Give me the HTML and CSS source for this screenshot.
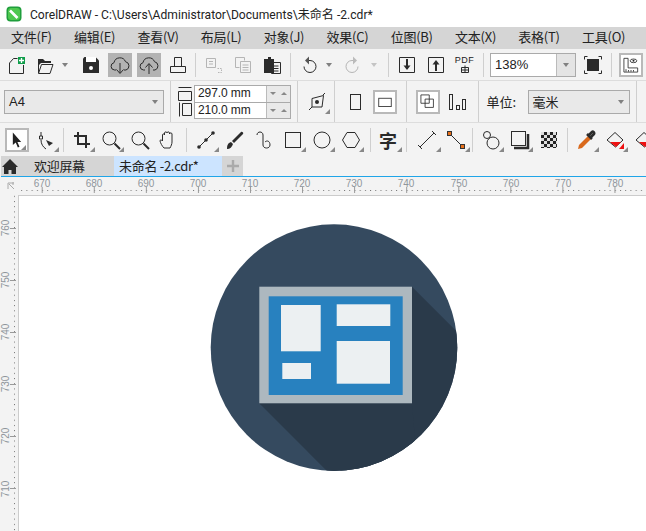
FILE: index.html
```html
<!DOCTYPE html>
<html lang="zh-CN"><head>
<meta charset="utf-8">
<title>CorelDRAW</title>
<link rel="stylesheet" href="styles.css">
</head>
<body>
<div class="app">

  <div class="titlebar">
    <svg class="logo" width="16" height="16" viewBox="0 0 16 16"><rect x="0.5" y="0.5" width="15" height="15" rx="4" fill="#1f9e3c"/><rect x="2" y="2" width="12" height="12" rx="3" fill="#4fc84f"/><path d="M4 4.500 11.500 12" stroke="#fff" stroke-width="2.600"/></svg>
    <span>CorelDRAW - C:\Users\Administrator\Documents\未命名 -2.cdr*</span>
  </div>

  <div class="menubar">
    <span>文件(F)</span><span>编辑(E)</span><span>查看(V)</span><span>布局(L)</span><span>对象(J)</span><span>效果(C)</span><span>位图(B)</span><span>文本(X)</span><span>表格(T)</span><span>工具(O)</span>
  </div>

  <div class="bar stdbar">
    <div class="btn"><svg viewBox="0 0 24 24"><path d="M4.500 20.500V10l4-4.500h4M18.500 12v8.500h-14" class="ln"/><rect x="13" y="4" width="7" height="7" fill="#0f9d4a"/><path d="M16.500 5v5M14 7.500h5" stroke="#fff" stroke-width="1.300"/></svg></div>
    <div class="btn"><svg viewBox="0 0 24 24"><path d="M4 6h5l2 2h6v2H7l-2 2-1 5z" fill="#2b2b2b"/><path d="M4.500 20.500h11.500l3-9H7.500z" class="ln"/><path d="M4.500 7v13" class="ln"/></svg></div>
    <div class="drop"><i></i></div>
    <div class="btn"><svg viewBox="0 0 24 24"><path d="M4 5.500 5.500 4h11L20 7.500V20H4z" fill="#2b2b2b"/><rect x="7" y="4" width="10" height="5" fill="#fff"/><circle cx="12" cy="15" r="2" fill="#fff"/></svg></div>
    <div class="btn on"><svg viewBox="0 0 24 24"><path d="M8 17H6.500a3.700 3.700 0 0 1-.5-7.300 6 6 0 0 1 11.500-1 4.300 4.300 0 0 1 .5 8.300h-2" class="ln"/><path d="M12 10v10M8.500 16.500 12 20.500l3.500-4" class="ln"/></svg></div>
    <div class="btn on"><svg viewBox="0 0 24 24"><path d="M8 17H6.500a3.700 3.700 0 0 1-.5-7.300 6 6 0 0 1 11.500-1 4.300 4.300 0 0 1 .5 8.300h-2" class="ln"/><path d="M12 21V11M8.500 14.500 12 10.500l3.500 4" class="ln"/></svg></div>
    <div class="btn"><svg viewBox="0 0 24 24"><path d="M8.500 13.500v-9h7v9M4.500 13.500h15v6h-15z" class="ln"/></svg></div>
    <div class="sep"></div>
    <div class="btn"><svg viewBox="0 0 24 24"><path d="M4.500 5.500h9v9h-9zM7 8.500h4M7 11h4" class="ln dim"/><path d="M15.500 15.500h4v4h-4" class="ln dim" stroke-dasharray="1.500 1"/></svg></div>
    <div class="btn"><svg viewBox="0 0 24 24"><path d="M4.500 4.500h9v3M4.500 4.500v10h4" class="ln dim"/><path d="M9.500 8.500h10v11h-10zM11.500 12h6M11.500 14.500h6M11.500 17h6" class="ln dim"/></svg></div>
    <div class="btn"><svg viewBox="0 0 24 24"><path d="M4 6h4V4h3v2h3v14H4z" fill="#2b2b2b"/><path d="M11.500 9.500h9v11h-9zM13.500 13h5M13.500 15.500h5M13.500 18h5" class="ln" fill="#fff"/></svg></div>
    <div class="sep gap"></div>
    <div class="btn"><svg viewBox="0 0 24 24"><path d="M10 7.500h3a6 6 0 1 1-6 6" class="ln"/><path d="M12 3.500v8l-4-4z" fill="#555"/></svg></div>
    <div class="drop mini"><i></i></div>
    <div class="btn"><svg viewBox="0 0 24 24"><path d="M14 7.500h-3a6 6 0 1 0 6 6" class="ln dim"/><path d="M12 3.500v8l4-4z" fill="#bbb"/></svg></div>
    <div class="drop mini faint"><i></i></div>
    <div class="sep"></div>
    <div class="btn"><svg viewBox="0 0 24 24"><path d="M4.500 4.500h15v15h-15z" class="ln"/><path d="M12 6v10" stroke="#2b2b2b" stroke-width="2"/><path d="M8.500 12.500h7L12 17z" fill="#2b2b2b"/></svg></div>
    <div class="btn"><svg viewBox="0 0 24 24"><path d="M4.500 4.500h15v15h-15z" class="ln"/><path d="M12 18V9" stroke="#2b2b2b" stroke-width="2"/><path d="M8.500 11.500h7L12 7z" fill="#2b2b2b"/></svg></div>
    <div class="btn pdf"><span>PDF</span><svg width="12" height="8" viewBox="0 0 12 8"><path d="M2.500 2.500h7v5h-7zM6 .5v7M2.500 5h7" class="ln"/></svg></div>
    <div class="sep gap"></div>
    <div class="combo zoombox"><span>138%</span><div class="cbtn"><i></i></div></div>
    <div class="btn"><svg viewBox="0 0 24 24"><rect x="6" y="6" width="12" height="12" fill="#2b2b2b"/><path d="M3.500 6.500v-3h3M17.500 3.500h3v3M20.500 17.500v3h-3M6.500 20.500h-3v-3" class="ln"/></svg></div>
    <div class="sep gap"></div>
    <div class="btn boxed"><svg viewBox="0 0 24 24"><path d="M3.500 4v16.500H20v-5H8.500V4z" class="ln"/><path d="M6 17v3M9 18v2M12 18v2M15 18v2" class="ln"/><ellipse cx="15" cy="7" rx="4" ry="2.200" class="ln"/><circle cx="15" cy="7" r="1.200" fill="#2b2b2b"/></svg></div>
  </div>

  <div class="bar propbar">
    <div class="combo pagesize"><span>A4</span><i></i></div>
    <div class="sep tall"></div>
    <div class="sizes">
      <div class="sizeicons">
        <svg width="14" height="15" viewBox="0 0 14 15"><path d="M.5 1.500h13M.5 5.500h13v9H.5z" class="ln"/></svg>
        <svg width="14" height="15" viewBox="0 0 14 15"><path d="M1.500.5v14M4.500 1.500h9v12h-9z" class="ln"/></svg>
      </div>
      <div class="sizefields">
        <div class="field"><span>297.0 mm</span><div class="spin"><i class="dn"></i><i class="up"></i></div></div>
        <div class="field"><span>210.0 mm</span><div class="spin"><i class="dn"></i><i class="up"></i></div></div>
      </div>
    </div>
    <div class="sep tall"></div>
    <div class="btn flyout origin"><svg viewBox="0 0 24 24"><path d="M7 8.500 18.500 5.500l-1.500 11.500H7z" class="ln"/><circle cx="12" cy="12" r="2" fill="#2b2b2b"/><path d="M7 17l-3 3M18 5l2-2" class="ln"/></svg></div>
    <div class="sep tall s-page"></div>
    <div class="btn portrait"><svg viewBox="0 0 24 24"><rect x="7.500" y="4.500" width="10" height="15" class="ln"/></svg></div>
    <div class="btn boxed"><svg viewBox="0 0 24 24"><rect x="4.500" y="7.500" width="15" height="10" class="ln"/></svg></div>
    <div class="sep tall s-layout"></div>
    <div class="btn boxed first"><svg viewBox="0 0 24 24"><path d="M3.500 3.500h10v10h-10zM8.500 8.500h10v10h-10z" class="ln"/></svg></div>
    <div class="btn"><svg viewBox="0 0 24 24"><rect x="4.500" y="4.500" width="3" height="15" class="ln"/><rect x="11.500" y="15.500" width="3" height="4" class="ln"/><rect x="17.500" y="9.500" width="3" height="10" class="ln"/></svg></div>
    <div class="sep tall s-unit"></div>
    <span class="unitlabel">单位:</span>
    <div class="combo unitbox"><span>毫米</span><i></i></div>
    <div class="sep tall"></div>
  </div>

  <div class="bar toolbox">
    <div class="btn boxed first flyout"><svg viewBox="0 0 24 24"><path d="M7 3v15l3.500-3 2.500 6 2-1-2.500-5.500H17z" fill="#222"/></svg></div>
    <div class="btn flyout"><svg viewBox="0 0 24 24"><path d="M7 4v4M7 12c0 4 2 7 5 9M5.500 8h3v3h-3z" class="ln"/><path d="M12 12l7 3-4 3z" fill="#2b2b2b"/></svg></div>
    <div class="sep short"></div>
    <div class="btn flyout"><svg viewBox="0 0 24 24"><path d="M8 4v12h12M4 8h12v12" stroke="#2b2b2b" stroke-width="2" fill="none"/></svg></div>
    <div class="btn flyout"><svg viewBox="0 0 24 24"><circle cx="10.500" cy="10.500" r="6.500" class="ln"/><path d="M15.500 15.500 21 21" stroke="#2b2b2b" stroke-width="2"/></svg></div>
    <div class="btn"><svg viewBox="0 0 24 24"><circle cx="10.500" cy="10.500" r="6.500" class="ln"/><path d="M15.500 15.500 21 21" stroke="#2b2b2b" stroke-width="2"/></svg></div>
    <div class="btn"><svg viewBox="0 0 24 24"><path d="M7 20c-2-2-3.500-5-4-7 0-1.500 1.500-1.500 2.500 0V7c0-1.500 2-1.500 2 0V5c0-1.500 2.500-1.500 2.500 0v0c0-1.500 2.500-1.500 2.500 0v1c0-1.500 2.500-1.500 2.500 0v8c0 2-1 4-2 6z" class="ln"/></svg></div>
    <div class="sep short s-draw"></div>
    <div class="btn flyout"><svg viewBox="0 0 24 24"><path d="M5 19 19 5" class="ln"/><circle cx="5" cy="19" r="1.800" fill="#2b2b2b"/><circle cx="12" cy="12" r="1.800" fill="#2b2b2b"/><circle cx="19" cy="5" r="1.800" fill="#2b2b2b"/></svg></div>
    <div class="btn"><svg viewBox="0 0 24 24"><path d="M4 21c0-4 1-6 4-7l2 2c-1 3-3 5-6 5z" fill="#2b2b2b"/><path d="M9 13 18 4c1-1 3 1 2 2l-9 9z" fill="#2b2b2b"/></svg></div>
    <div class="btn"><svg viewBox="0 0 24 24"><path d="M5 7c0-4 6-4 6 0v10c0 4 7 4 7 0s-3-5-5-3" class="ln" fill="none"/></svg></div>
    <div class="btn flyout"><svg viewBox="0 0 24 24"><rect x="4.500" y="4.500" width="15" height="15" class="ln"/></svg></div>
    <div class="btn flyout"><svg viewBox="0 0 24 24"><circle cx="12" cy="12" r="8" class="ln"/></svg></div>
    <div class="btn flyout"><svg viewBox="0 0 24 24"><path d="M8 4.500h8l4.500 7.500-4.500 7.500H8L3.500 12z" class="ln"/></svg></div>
    <div class="sep short s-text"></div>
    <div class="btn flyout glyph">字</div>
    <div class="sep short s-dim"></div>
    <div class="btn flyout"><svg viewBox="0 0 24 24"><path d="M5 19 19 5M3 17l4 4M17 3l4 4" class="ln"/></svg></div>
    <div class="btn flyout"><svg viewBox="0 0 24 24"><path d="M6 6 18 18" class="ln"/><rect x="3.500" y="3.500" width="4" height="4" fill="#e8701a" stroke="#333"/><rect x="16.500" y="16.500" width="4" height="4" fill="#e8701a" stroke="#333"/></svg></div>
    <div class="sep short s-effect"></div>
    <div class="btn flyout"><svg viewBox="0 0 24 24"><circle cx="8" cy="7" r="3.500" class="ln"/><circle cx="14" cy="15" r="6" class="ln"/></svg></div>
    <div class="btn flyout"><svg viewBox="0 0 24 24"><rect x="3.500" y="3.500" width="14" height="14" class="ln" stroke-width="1.500"/><path d="M20 6v14H6" stroke="#2b2b2b" stroke-width="2.500" fill="none"/></svg></div>
    <div class="btn"><svg viewBox="0 0 24 24"><defs><pattern id="chk" width="6" height="6" patternUnits="userSpaceOnUse" x="4" y="4"><rect width="6" height="6" fill="#222"/><rect width="3" height="3" fill="#ddd"/><rect x="3" y="3" width="3" height="3" fill="#ddd"/></pattern></defs><rect x="4" y="4" width="16" height="16" fill="url(#chk)"/></svg></div>
    <div class="sep short s-color"></div>
    <div class="btn flyout"><svg viewBox="0 0 24 24"><path d="M4 21l1-4 9-9 3 3-9 9z" fill="#d9691c"/><path d="M13 6l5 5M15 7l3-3c1-1 3 1 2 2l-3 3" stroke="#2b2b2b" stroke-width="2.500" fill="none"/></svg></div>
    <div class="btn flyout"><svg viewBox="0 0 24 24"><path d="M12 4.500 20 12l-7.500 7L4 12z" class="ln" stroke-width="2"/><path d="M7 14h11l-5 5z" fill="#e11"/><path d="M21 15v6h-5z" fill="#e11"/></svg></div>
    <div class="btn"><svg viewBox="0 0 24 24"><path d="M12 4.500 20 12l-7.500 7L4 12z" class="ln" stroke-width="2"/><path d="M7 14h11l-5 5z" fill="#e11"/></svg></div>
  </div>

  <div class="tabs">
    <div class="tab home"><svg width="16" height="15" viewBox="0 0 16 15"><path d="M8 0 16 8h-2v7H9.500v-4h-3v4H2V8H0z" fill="#2b2b2b"/></svg></div>
    <div class="tab welcome">欢迎屏幕</div>
    <div class="tab current">未命名 -2.cdr*</div>
    <div class="tab plus"><svg width="12" height="12" viewBox="0 0 12 12"><path d="M6 0v12M0 6h12" stroke="#aaa" stroke-width="2.400"/></svg></div>
  </div>

  <svg class="ruler-h" width="646" height="18" viewBox="0 177 646 18">
    <defs>
      <pattern id="dotsh" x="21.200" y="190" width="5.207" height="2" patternUnits="userSpaceOnUse"><rect width="1" height="1" fill="#777"/></pattern>
      <pattern id="tickh" x="41.700" y="187" width="52.07" height="8" patternUnits="userSpaceOnUse"><rect width="1" height="6" fill="#999"/></pattern>
    </defs>
    <path d="M8 183h6M8 183v6M9 184l5 5M13 182v3" stroke="#aaa" fill="none"/>
    <rect x="19" y="190" width="627" height="2" fill="url(#dotsh)"/>
    <rect x="19" y="187" width="627" height="6" fill="url(#tickh)"/>
    <g class="rtext" text-anchor="middle">
      <text x="42" y="186.500">670</text><text x="94" y="186.500">680</text><text x="146" y="186.500">690</text><text x="198" y="186.500">700</text><text x="250" y="186.500">710</text><text x="302" y="186.500">720</text><text x="354" y="186.500">730</text><text x="406" y="186.500">740</text><text x="459" y="186.500">750</text><text x="511" y="186.500">760</text><text x="563" y="186.500">770</text><text x="615" y="186.500">780</text>
    </g>
  </svg>

  <div class="work">
    <svg class="ruler-v" width="18" height="336" viewBox="0 195 18 336">
      <defs>
        <pattern id="dotsv" x="14" y="201" width="2" height="5.207" patternUnits="userSpaceOnUse"><rect width="1" height="1" fill="#777"/></pattern>
      </defs>
      <rect x="14" y="195" width="2" height="336" fill="url(#dotsv)"/>
      <path d="M10 228.500h6M10 280.500h6M10 332.500h6M10 384.500h6M10 436.500h6M10 488.500h6" stroke="#999"/>
      <g class="rtext" text-anchor="middle">
        <text transform="translate(9.200 228) rotate(-90)">760</text>
        <text transform="translate(9.200 280) rotate(-90)">750</text>
        <text transform="translate(9.200 332) rotate(-90)">740</text>
        <text transform="translate(9.200 384) rotate(-90)">730</text>
        <text transform="translate(9.200 436) rotate(-90)">720</text>
        <text transform="translate(9.200 489) rotate(-90)">710</text>
      </g>
    </svg>
    <div class="sheet">
      <svg width="628" height="336" viewBox="18 195 628 336">
        <defs><clipPath id="disc"><circle cx="334" cy="347.600" r="123.300"/></clipPath></defs>
        <circle cx="334" cy="347.600" r="123.300" fill="#354a5f"/>
        <path d="M412 286.700 500 374.700V520H400L259.300 403.300z" fill="#2a3a4a" clip-path="url(#disc)"/>
        <path d="M259.300 403.300 326.700 470.700 420 500 412 403.300z" fill="#2a3a4a" clip-path="url(#disc)"/>
        <rect x="259.300" y="286.700" width="152.700" height="116.600" fill="#adb8bf"/>
        <rect x="268.700" y="296.300" width="134" height="98.700" fill="#2881bf"/>
        <g fill="#ecf0f2">
          <rect x="281" y="305" width="39.700" height="46.300"/>
          <rect x="336.700" y="304.300" width="53.600" height="21.700"/>
          <rect x="336.700" y="341" width="53.300" height="42.700"/>
          <rect x="282.300" y="363" width="28.700" height="16"/>
        </g>
      </svg>
    </div>
  </div>

</div>
</body>
</html>
```

FILE: styles.css
```css
*,*::before,*::after {box-sizing: border-box;}
html,body {margin: 0; padding: 0;}
body {
  font-family: "Liberation Sans", "Noto Sans CJK SC", sans-serif;
  font-size: 13px;
  color: #222;
  background: #fff;
}
.app {
  width: 646px;
  height: 531px;
  overflow: hidden;
  display: flex;
  flex-direction: column;
  background: #f3f3f3;
}
svg {display: block;}
.ln {fill: none; stroke: #2b2b2b; stroke-width: 1;}
.ln.dim {stroke: #b5b5b5;}

.titlebar {
  height: 27px;
  background: #fff;
  display: flex;
  align-items: center;
  padding-left: 6px;
  gap: 8px;
  font-family: Roboto, "Noto Sans CJK SC", sans-serif;
  font-size: 12.100px;
  white-space: nowrap;
}
.menubar {
  height: 22px;
  background: #d5d5d5;
  display: flex;
  align-items: center;
  gap: 22.300px;
  padding: 0 0 3px 11px;
  font-family: "Noto Sans CJK SC", sans-serif;
  font-size: 13px;
  letter-spacing: -.25px;
}
.menubar span {flex: none; white-space: nowrap;}

.bar {display: flex; align-items: center; background: #f3f3f3; border-bottom: 1px solid #ddd;}
.stdbar {height: 32px; padding-left: 2px;}
.propbar {height: 42px; padding-left: 4px;}
.toolbox {height: 30px; padding-left: 5px; border-bottom: 0; align-items: flex-end; padding-bottom: 1px;}

.btn {
  position: relative;
  flex: none;
  width: 29px;
  height: 24px;
  display: flex;
  align-items: center;
  justify-content: center;
}
.btn svg {width: 24px; height: 24px;}
.btn.on::before {
  content: "";
  position: absolute;
  left: 2.500px;
  top: 0;
  width: 24px;
  height: 24px;
  background: #b3b3b3;
}
.btn.on svg {position: relative;}
.btn.boxed {width: 24px; background: #fff; border: 2px solid #b9b9b9;}
.btn.boxed.first {margin-right: 2px;}
.stdbar .btn.boxed {margin-left: 4px;}
.btn.flyout::after {
  content: "";
  position: absolute;
  right: 1px;
  bottom: 0;
  border-style: solid;
  border-width: 0 0 5px 5px;
  border-color: transparent transparent #888 transparent;
}
.btn.origin {margin-left: -2px;}
.btn.portrait {margin-right: 3.500px;}
.glyph {font-family: "Noto Sans CJK SC", sans-serif; font-weight: 700; font-size: 18px; color: #2b2b2b;}
.pdf {flex-direction: column; font-size: 9px; line-height: 9px; letter-spacing: .5px;}
.pdf svg {width: 12px; height: 8px;}

.drop {flex: none; width: 16px; height: 24px; display: flex; align-items: center; padding-left: 2px;}
.drop.mini {width: 15px; padding-left: 3px;}
.drop.mini.faint {width: 18px; padding-left: 4px;}
.drop i, .cbtn i, .pagesize i, .unitbox i {
  display: block;
  border-style: solid;
  border-width: 4px 3.500px 0;
  border-color: #808080 transparent transparent;
}
.drop.faint i {border-top-color: #c4c4c4;}

.sep {flex: none; width: 1px; height: 24px; margin: 0 3px; background: #cfcfcf;}
.sep.gap {margin: 0 3px 0 4px;}
.sep.tall {height: 41px; margin: 0 6px;}
.sep.short {height: 24px; margin: 0 3px;}
.sep.tall.s-page {margin: 0 5.500px 0 3px;}
.sep.tall.s-layout {margin: 0 9px;}
.sep.tall.s-unit {margin: 0 8px 0 6.500px;}
.sep.short.s-draw {margin: 0 4px 0 3px;}
.sep.short.s-text {margin: 0 2.500px 0 5px;}
.sep.short.s-dim {margin: 0 5.500px 0 3.500px;}
.sep.short.s-effect {margin: 0 3px 0 1.500px;}
.sep.short.s-color {margin: 0 3.500px;}

.combo {display: flex; align-items: center; flex: none; border: 1px solid #aaa; height: 24px;}
.zoombox {width: 86px; margin: 0 2px 0 3px; background: #fff; padding-left: 4px; justify-content: space-between;}
.cbtn {width: 19px; height: 22px; background: #e4e4e4; border-left: 1px solid #bbb; display: flex; align-items: center; justify-content: center;}
.pagesize {width: 160px; background: #e9e9e9; padding: 0 5px 0 4px; justify-content: space-between;}
.unitbox {
  width: 102px;
  background: #e9e9e9;
  padding: 0 5px 0 4px;
  justify-content: space-between;
  font-family: "Noto Sans CJK SC", sans-serif;
}

.sizes {display: flex; align-items: center; gap: 2px; margin-left: 1px;}
.sizeicons {display: flex; flex-direction: column; gap: 1px;}
.sizefields {border: 1px solid #aaa; width: 97px;}
.field {display: flex; height: 16px; align-items: center; background: #fff; line-height: 15px;}
.field + .field {border-top: 1px solid #aaa;}
.field span {width: 72px; padding-left: 3px; font-size: 12px; letter-spacing: -.1px;}
.spin {
  width: 24px;
  height: 100%;
  background: #e9e9e9;
  border-left: 1px solid #bbb;
  display: flex;
  align-items: center;
  justify-content: space-around;
}
.spin i {display: block; border-style: solid; border-color: transparent;}
.spin .dn {border-width: 3px 3px 0; border-top-color: #888;}
.spin .up {border-width: 0 3px 3px; border-bottom-color: #888;}
.unitlabel {font-family: "Noto Sans CJK SC", sans-serif; flex: none; width: 41px; white-space: nowrap;}

.tabs {display: flex; height: 21px; margin: 3px 0 0 1px; border-bottom: 1px solid #1fa5e8;}
.tab {
  height: 20px;
  display: flex;
  align-items: center;
  padding-bottom: 1px;
  background: #d5d5d5;
  font-family: "Noto Sans CJK SC", sans-serif;
  letter-spacing: -.3px;
}
.home {width: 17px; justify-content: center; padding-bottom: 0;}
.welcome {width: 96px; padding-left: 16px;}
.current {width: 108px; padding-left: 5px; background: #cce4ff;}
.plus {width: 21px; justify-content: center;}

.rtext {font-family: "Liberation Sans", sans-serif; font-size: 10px; fill: #8f969c;}
.ruler-h {flex: none; overflow: visible;}
.work {flex: 1; display: flex; min-height: 0;}
.ruler-v {flex: none;}
.sheet {flex: 1; background: #fff; border-left: 1px solid #ccc; border-top: 1px solid #ccc; overflow: hidden;}
.sheet svg {margin: -1px 0 0 -1px;}
```
